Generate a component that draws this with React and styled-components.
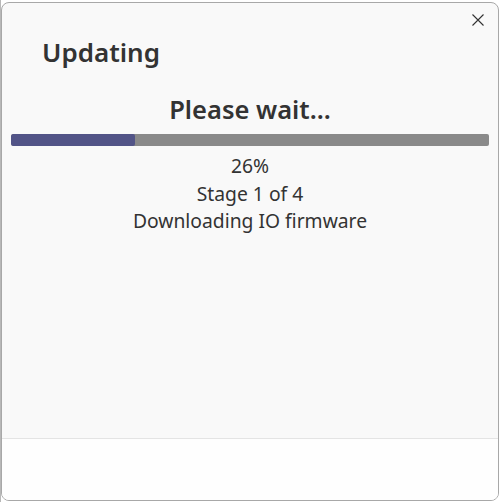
import React from "react";
import styled, { createGlobalStyle } from "styled-components";

const GlobalStyle = createGlobalStyle`
  html, body {
    margin: 0;
    padding: 0;
    background: #ffffff;
  }
  body {
    font-family: "Noto Sans", "Open Sans", sans-serif;
    color: #333333;
  }
`;

const Screen = styled.div`
  width: 499px;
  height: 502px;
  box-sizing: border-box;
  padding: 2px 0 1px 0;
  background: #ffffff;
  border-left: 1px solid #b8b8b8;
`;

const Dialog = styled.div`
  position: relative;
  height: 100%;
  box-sizing: border-box;
  display: flex;
  flex-direction: column;
  background: #f9f9f9;
  border: 1px solid #a8a8a8;
  border-radius: 8px;
  overflow: hidden;
`;

const CloseButton = styled.button`
  position: absolute;
  top: 6px;
  right: 9px;
  width: 22px;
  height: 22px;
  padding: 0;
  border: none;
  background: transparent;
  display: flex;
  align-items: center;
  justify-content: center;
  cursor: pointer;
`;

const Content = styled.div`
  flex: 1;
  display: flex;
  flex-direction: column;
  padding: 0 9px;
`;

const Title = styled.h1`
  margin: 31px 0 0 31px;
  font-size: 26px;
  font-weight: 600;
  line-height: 36px;
  color: #333333;
`;

const Heading = styled.h2`
  margin: 21px 0 0;
  text-align: center;
  font-size: 25.5px;
  font-weight: 600;
  line-height: 36px;
  color: #333333;
`;

const Track = styled.div`
  height: 12px;
  margin-top: 7px;
  background: #8a8a8a;
  border-radius: 2px;
  overflow: hidden;
`;

const Fill = styled.div`
  height: 100%;
  background: #525487;
  border-radius: 2px;
`;

const Status = styled.div`
  margin-top: 6px;
  display: flex;
  flex-direction: column;
  align-items: center;
`;

const Line = styled.div`
  font-size: 19.3px;
  line-height: 27.5px;
  color: #333333;
`;

const Footer = styled.div`
  height: 61px;
  background: #fefefe;
  border-top: 1px solid #e4e4e4;
`;

const CloseIcon = () => (
  <svg width="12" height="12" viewBox="0 0 12 12" fill="none">
    <path d="M0.5 0.5L11.5 11.5M11.5 0.5L0.5 11.5" stroke="#333" strokeWidth="1.1" />
  </svg>
);

export default function App() {
  const progress = 26;
  return (
    <>
      <GlobalStyle />
      <Screen>
        <Dialog>
          <CloseButton aria-label="Close">
            <CloseIcon />
          </CloseButton>
          <Content>
            <Title>Updating</Title>
            <Heading>Please wait...</Heading>
            <Track>
              <Fill style={{ width: `${progress}%` }} />
            </Track>
            <Status>
              <Line>{progress}%</Line>
              <Line>Stage 1 of 4</Line>
              <Line>Downloading IO firmware</Line>
            </Status>
          </Content>
          <Footer />
        </Dialog>
      </Screen>
    </>
  );
}
